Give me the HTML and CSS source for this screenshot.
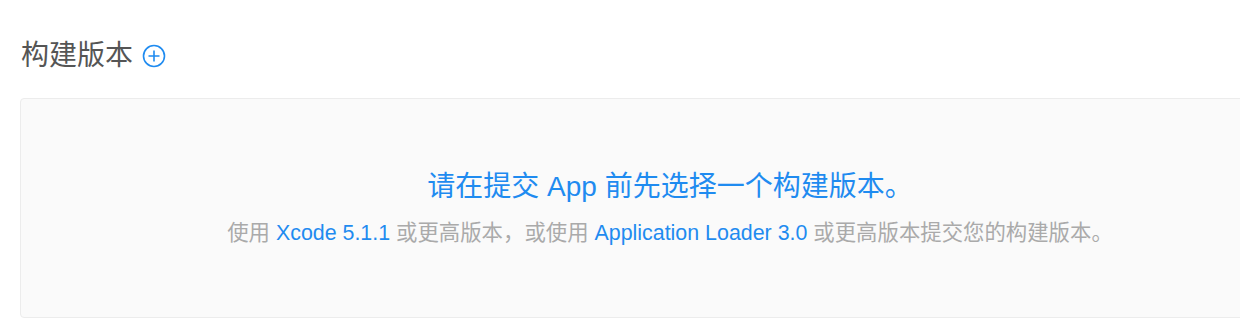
FILE: index.html
```html
<!DOCTYPE html>
<html lang="zh-CN">
<head>
<meta charset="utf-8">
<link rel="stylesheet" href="styles.css">
</head>
<body>
<div class="page">
  <div class="section-head">
    <h2 class="section-title">构建版本</h2>
    <span class="add-btn" aria-label="添加">
      <svg width="24" height="24" viewBox="0 0 24 24">
        <circle cx="12" cy="12" r="10.5" fill="none" stroke="#1f8bf0" stroke-width="1.6"/>
        <path d="M12 6.5v11M6.5 12h11" stroke="#1f8bf0" stroke-width="1.6" fill="none"/>
      </svg>
    </span>
  </div>
  <div class="empty-box">
    <p class="empty-main">请在提交 App 前先选择一个构建版本。</p>
    <p class="empty-sub">使用 <a class="link">Xcode 5.1.1</a> 或更高版本，或使用 <a class="link">Application Loader 3.0</a> 或更高版本提交您的构建版本。</p>
  </div>
</div>
</body>
</html>
```
FILE: styles.css
```css
html, body {
  margin: 0;
  padding: 0;
  background: #fff;
  overflow: hidden;
}
body {
  font-family: "Liberation Sans", "Noto Sans CJK SC", sans-serif;
}
.page {
  padding: 38px 0 0 21px;
  width: 1300px;
}
.section-head {
  display: flex;
  align-items: center;
  gap: 9px;
  height: 36px;
}
.section-title {
  margin: 0;
  font-weight: 400;
  font-size: 28px;
  color: #555;
  line-height: 36px;
}
.add-btn {
  display: flex;
  width: 24px;
  height: 24px;
}
.empty-box {
  margin: 24px 0 0 -1px;
  width: 1300px;
  height: 220px;
  box-sizing: border-box;
  background: #fafafa;
  border: 1px solid #ececec;
  border-radius: 4px;
  display: flex;
  flex-direction: column;
  align-items: center;
  padding-top: 70px;
}
.empty-main {
  margin: 0;
  font-size: 28px;
  line-height: 36px;
  color: #1f8bf0;
}
.empty-sub {
  margin: 14px 0 0;
  font-size: 21.4px;
  line-height: 28px;
  color: #aaa;
}
.link {
  color: #1f8bf0;
  text-decoration: none;
}
```
